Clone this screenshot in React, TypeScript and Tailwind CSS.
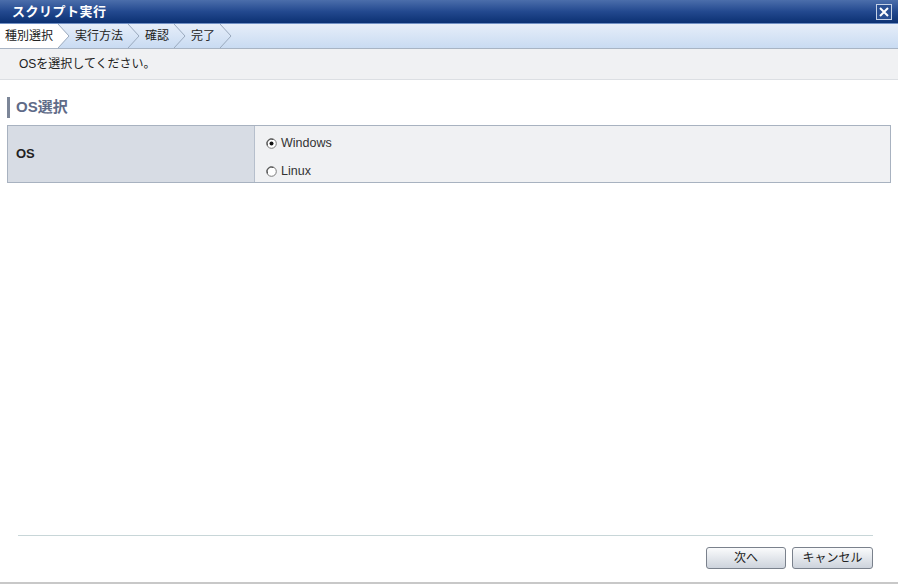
import React from "react"

const steps = ["種別選択", "実行方法", "確認", "完了"]

function Chevron({ filled }: { filled?: boolean }) {
  return (
    <svg width="12" height="24" viewBox="0 0 12 24" className="shrink-0">
      {filled && <path d="M0 0 L11 12 L0 24 Z" fill="#fff" />}
      <path d="M0 0 L11 12 L0 24" fill="none" stroke="#9aa9bd" strokeWidth="1" />
    </svg>
  )
}

function Radio({ checked }: { checked?: boolean }) {
  return (
    <svg width="11" height="11" viewBox="0 0 11 11" className="shrink-0">
      <circle cx="5.5" cy="5.5" r="4.8" fill="#fff" stroke="#7a7a7a" strokeWidth="1" />
      <path d="M1.5 7.5 A4.5 4.5 0 0 1 7.5 1.5" fill="none" stroke="#404040" strokeWidth="1" />
      {checked && <circle cx="5.5" cy="5.5" r="2" fill="#111" />}
    </svg>
  )
}

export default function App() {
  return (
    <div
      className="w-[898px] h-[584px] bg-white flex flex-col text-[12px] text-[#222]"
      style={{ fontFamily: '"Liberation Sans", "Noto Sans CJK JP", sans-serif' }}
    >
      {/* title bar */}
      <div className="h-[24px] flex items-center justify-between pl-[12px] pr-[6px] bg-gradient-to-b from-[#4b6eab] via-[#23498f] to-[#0b3173] border-b border-[#6f8fc4]">
        <span className="text-white font-bold text-[13px] tracking-[0.5px]">スクリプト実行</span>
        <button className="w-[16px] h-[16px] border border-[#c6d2e6] bg-[#2a4f92] flex items-center justify-center">
          <svg width="10" height="10" viewBox="0 0 10 10">
            <path d="M1 1 L9 9 M9 1 L1 9" stroke="#fff" strokeWidth="2" />
          </svg>
        </button>
      </div>

      {/* steps */}
      <div className="h-[25px] flex items-stretch bg-gradient-to-b from-[#e6eef9] to-[#c9dbf2] border-b border-[#a8b4c4]">
        {steps.map((s, i) => (
          <div key={s} className="flex items-center">
            <span className={`pl-[5px] pr-[5px] h-full flex items-center whitespace-nowrap ${i === 0 ? "bg-white" : ""}`}>{s}</span>
            <Chevron filled={i === 0} />
          </div>
        ))}
      </div>

      {/* message */}
      <div className="h-[31px] flex items-center pl-[19px] bg-[#f0f1f3] border-b border-[#dcdfe3]">
        OSを選択してください。
      </div>

      {/* body */}
      <div className="flex-1 flex flex-col px-[7px] pt-[17px]">
        <div className="flex items-center h-[21px] border-l-[3px] border-[#7c8698] pl-[6px] text-[#5f6b88] font-bold text-[15px]">
          OS選択
        </div>
        <div className="mt-[7px] flex border border-[#a8b2c0] h-[58px]">
          <div className="w-[247px] bg-[#d7dce4] border-r border-[#b6bfcc] flex items-center pl-[8px] font-bold text-[13px]">
            OS
          </div>
          <div className="flex-1 bg-[#f0f1f3] flex flex-col pl-[11px] pt-[9px] gap-[12px]">
            <label className="flex items-center gap-[4px] h-[16px]">
              <Radio checked />
              <span className="text-[#333] text-[12.5px]">Windows</span>
            </label>
            <label className="flex items-center gap-[4px] h-[16px]">
              <Radio />
              <span className="text-[#333] text-[12.5px]">Linux</span>
            </label>
          </div>
        </div>
        <div className="flex-1" />
        <div className="ml-[11px] mr-[18px] border-t border-[#c8d6d8]" />
        <div className="flex justify-end gap-[6px] pr-[18px] pt-[11px] pb-[13px]">
          <button className="w-[80px] h-[22px] rounded-[3px] border border-[#7a818c] bg-gradient-to-b from-[#fafbfc] to-[#cdd3dc] text-[12px]">
            次へ
          </button>
          <button className="w-[81px] h-[22px] rounded-[3px] border border-[#7a818c] bg-gradient-to-b from-[#fafbfc] to-[#cdd3dc] text-[12px]">
            キャンセル
          </button>
        </div>
      </div>
      <div className="h-[2px] bg-[#c8c8c8]" />
    </div>
  )
}
